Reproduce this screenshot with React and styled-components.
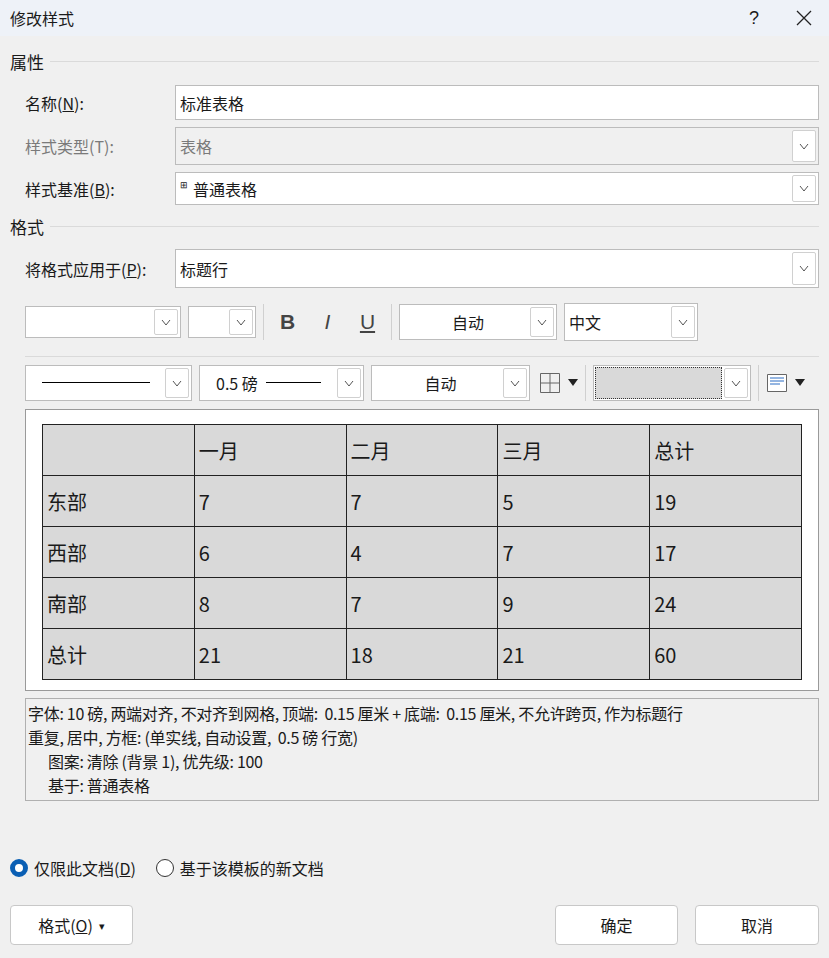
import React from 'react';
import styled, { createGlobalStyle } from 'styled-components';

const Global = createGlobalStyle`
  body { margin: 0; font-family: "Microsoft YaHei", "Noto Sans CJK SC", "Liberation Sans", sans-serif; }
  * { box-sizing: border-box; }
`;

const Dialog = styled.div`
  width: 829px; height: 958px; background: #f0f0f0; color: #1a1a1a;
  display: flex; flex-direction: column; font-size: 16px;
`;
const TitleBar = styled.div`
  height: 36px; background: #eef2f8; display: flex; align-items: center;
  padding: 0 0 0 10px; font-size: 16px;
`;
const TitleText = styled.div` flex: 1; `;
const TitleBtn = styled.div`
  width: 50px; display: flex; justify-content: center; font-size: 18px; font-family: "Liberation Sans", sans-serif;
`;
const Body = styled.div` padding: 14px 10px 0 10px; display: flex; flex-direction: column; flex: 1; `;
const Section = styled.div`
  display: flex; align-items: center; gap: 6px; font-size: 17px; height: 22px;
  &::after { content: ""; flex: 1; border-top: 1px solid #dadada; }
`;
const Row = styled.div`
  display: grid; grid-template-columns: 150px 1fr; align-items: center;
  padding-left: 15px; margin-top: ${p => p.$mt || 7}px;
`;
const Label = styled.div` color: ${p => p.$dis ? '#7a7a7a' : '#1a1a1a'}; `;
const Field = styled.div`
  height: ${p => p.$h || 35}px; border: 1px solid #bcbcbc; background: ${p => p.$dis ? '#f0f0f0' : '#fff'};
  display: flex; align-items: center; padding-left: 4px; color: ${p => p.$dis ? '#7a7a7a' : '#1a1a1a'};
  width: ${p => p.$w ? p.$w + 'px' : 'auto'}; justify-content: ${p => p.$center ? 'center' : 'flex-start'};
  position: relative;
`;
const Caret = styled.div`
  position: absolute; right: 2px; top: 2px; bottom: 2px; width: 24px; border: 1px solid #d0d0d0;
  border-radius: 2px; background: #fff; display: flex; align-items: center; justify-content: center;
`;
const Shade = styled.div`
  position: absolute; left: 1px; top: 1px; bottom: 1px; right: 28px; background: #d9d9d9; border: 1px dotted #333;
`;
const Chev = () => (
  <svg width="10" height="7" viewBox="0 0 10 7"><path d="M1 1l4 5 4-5" fill="none" stroke="#555" strokeWidth="1" /></svg>
);
const Combo = ({ children, ...p }) => (
  <Field {...p}>{children}<Caret><Chev /></Caret></Field>
);
const Toolbar = styled.div`
  display: flex; align-items: center; gap: ${p => p.$gap || 7}px; padding-left: 15px; margin-top: ${p => p.$mt}px;
`;
const Sep = styled.div` width: 1px; height: 36px; background: #d0d0d0; `;
const HLine = styled.div` border-top: 1px solid #dadada; margin: 15px 0 0 15px; `;
const FmtBtn = styled.div`
  width: 33px; text-align: center; font-size: 21px; font-family: "Liberation Sans", sans-serif;
  font-weight: ${p => p.$b ? 700 : 400}; font-style: ${p => p.$i ? 'italic' : 'normal'};
  text-decoration: ${p => p.$u ? 'underline' : 'none'}; color: #444;
`;
const Arrow = styled.span` font-size: 11px; margin-left: 6px; `;
const Preview = styled.div`
  margin: 8px 0 0 15px; background: #fff; border: 1px solid #9a9a9a; height: 282px;
  padding: 14px 16px 0 16px;
`;
const Table = styled.table`
  border-collapse: collapse; width: 760px; table-layout: fixed;
  td { border: 1px solid #222; background: #d9d9d9; height: 51px; padding: 0 4px; font-size: 20px; }
`;
const Desc = styled.div`
  margin: 7px 0 0 15px; border: 1px solid #b0b0b0; height: 103px; padding: 2px 2px;
  font-size: 16px; line-height: 24px; background: #f0f0f0; white-space: nowrap; letter-spacing: -0.3px;
`;
const Indent = styled.div` padding-left: 20px; `;
const Radios = styled.div` display: flex; align-items: center; gap: 6px; margin-top: 55px; `;
const Radio = styled.div`
  width: 18px; height: 18px; border-radius: 50%;
  border: ${p => p.$on ? '5px solid #0a5fb4' : '1px solid #333'}; background: #fff;
`;
const RLabel = styled.span` margin-right: 14px; `;
const Buttons = styled.div` display: flex; align-items: center; margin-top: 25px; gap: 17px; `;
const Btn = styled.div`
  height: 40px; width: ${p => p.$w}px; border: 1px solid #c8c8c8; border-radius: 4px; background: #fff;
  display: flex; align-items: center; justify-content: center;
  margin-left: ${p => p.$auto ? 'auto' : 0};
`;
const U = styled.u``;
const Glyph = styled.span` font-size: 9px; margin-right: 5px; margin-top: -8px; `;
const LineSample = styled.svg` margin-left: ${p => p.$ml}px; `;
const Pad = styled.span` margin-left: 12px; `;

const rows = [
  ['', '一月', '二月', '三月', '总计'],
  ['东部', '7', '7', '5', '19'],
  ['西部', '6', '4', '7', '17'],
  ['南部', '8', '7', '9', '24'],
  ['总计', '21', '18', '21', '60'],
];

const DropTri = () => (
  <svg width="10" height="8" viewBox="0 0 10 8"><path d="M0 0h10L5 7z" fill="#222" /></svg>
);

export default function App() {
  return (
    <Dialog>
      <Global />
      <TitleBar>
        <TitleText>修改样式</TitleText>
        <TitleBtn>?</TitleBtn>
        <TitleBtn>
          <svg width="16" height="16" viewBox="0 0 16 16"><path d="M1 1l14 14M15 1L1 15" stroke="#222" strokeWidth="1.3" /></svg>
        </TitleBtn>
      </TitleBar>
      <Body>
        <Section>属性</Section>
        <Row $mt={13}><Label>名称(<U>N</U>):</Label><Field>标准表格</Field></Row>
        <Row><Label $dis>样式类型(T):</Label><Combo $dis $h={38}>表格</Combo></Row>
        <Row><Label>样式基准(<U>B</U>):</Label>
          <Combo $h={33}><Glyph>⊞</Glyph>普通表格</Combo></Row>
        <Section style={{ marginTop: 10 }}>格式</Section>
        <Row $mt={12}><Label>将格式应用于(<U>P</U>):</Label><Combo $h={39}>标题行</Combo></Row>
        <Toolbar $mt={15}>
          <Combo $w={156} $h={32} />
          <Combo $w={68} $h={32} />
          <Sep />
          <FmtBtn $b>B</FmtBtn><FmtBtn $i>I</FmtBtn><FmtBtn $u>U</FmtBtn>
          <Sep />
          <Combo $w={158} $h={36} $center>
            <span style={{ paddingRight: 24 }}>自动</span>
          </Combo>
          <Combo $w={134} $h={38}>中文</Combo>
        </Toolbar>
        <HLine />
        <Toolbar $mt={8}>
          <Combo $w={167} $h={36}><LineSample $ml={12} width="110" height="2"><rect width="108" height="1" fill="#000" /></LineSample></Combo>
          <Combo $w={165} $h={36}><Pad>0.5 磅</Pad><LineSample $ml={8} width="60" height="2"><rect width="55" height="1" fill="#000" /></LineSample></Combo>
          <Combo $w={159} $h={36} $center><span style={{ paddingRight: 24 }}>自动</span></Combo>
          <svg width="22" height="22" viewBox="0 0 22 22" style={{ marginLeft: 2 }}><path d="M1.5 1.5h19v19h-19zM11 1.5v19M1.5 11h19" fill="none" stroke="#666" /></svg>
          <DropTri />
          <Sep />
          <Combo $w={158} $h={36}><Shade /></Combo>
          <Sep />
          <svg width="22" height="20" viewBox="0 0 22 20"><path d="M1.5 1.5h19v17h-19z" fill="#fff" stroke="#666" /><path d="M4 5h14M4 8h14M4 11h10" stroke="#2b6cc4" /></svg>
          <DropTri />
        </Toolbar>
        <Preview>
          <Table><tbody>
            {rows.map((r, i) => <tr key={i}>{r.map((c, j) => <td key={j}>{c}</td>)}</tr>)}
          </tbody></Table>
        </Preview>
        <Desc>
          字体: 10 磅, 两端对齐, 不对齐到网格, 顶端:&nbsp; 0.15 厘米 + 底端:&nbsp; 0.15 厘米, 不允许跨页, 作为标题行<br />
          重复, 居中, 方框: (单实线, 自动设置,&nbsp; 0.5 磅 行宽)
          <Indent>图案: 清除 (背景 1), 优先级: 100</Indent>
          <Indent>基于: 普通表格</Indent>
        </Desc>
        <Radios>
          <Radio $on /><RLabel>仅限此文档(<U>D</U>)</RLabel>
          <Radio /><RLabel>基于该模板的新文档</RLabel>
        </Radios>
        <Buttons>
          <Btn $w={123}>格式(<U>O</U>)<Arrow>▾</Arrow></Btn>
          <Btn $w={123} $auto>确定</Btn>
          <Btn $w={124}>取消</Btn>
        </Buttons>
      </Body>
    </Dialog>
  );
}
